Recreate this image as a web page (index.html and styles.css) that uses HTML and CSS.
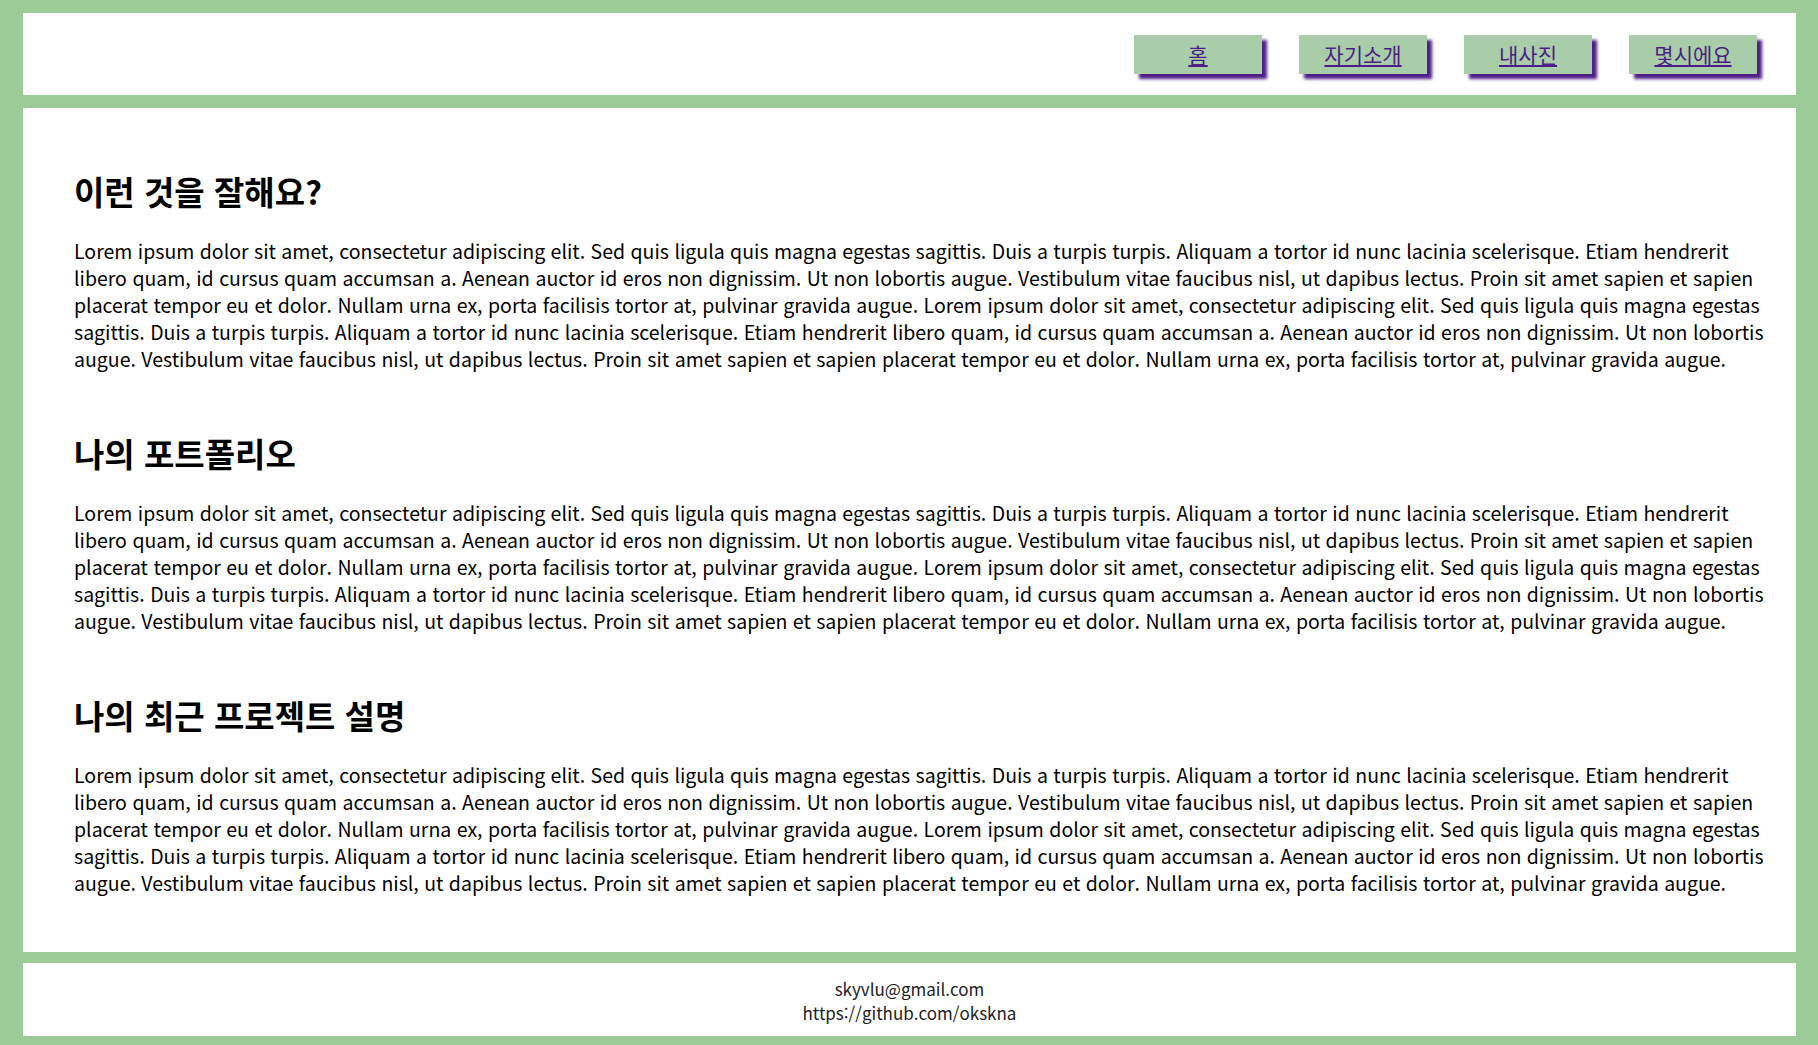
FILE: index.html
```html
<!DOCTYPE html>
<html lang="ko">
<head>
<meta charset="utf-8">
<title>포트폴리오</title>
<link rel="stylesheet" href="styles.css">
</head>
<body>
<header class="site-header">
  <nav class="nav">
    <a class="nav-btn" href="#">홈</a>
    <a class="nav-btn" href="#">자기소개</a>
    <a class="nav-btn" href="#">내사진</a>
    <a class="nav-btn" href="#">몇시에요</a>
  </nav>
</header>
<main class="content">
  <section class="block">
    <h2 class="block-title">이런 것을 잘해요?</h2>
    <p class="block-text">Lorem ipsum dolor sit amet, consectetur adipiscing elit. Sed quis ligula quis magna egestas sagittis. Duis a turpis turpis. Aliquam a tortor id nunc lacinia scelerisque. Etiam hendrerit libero quam, id cursus quam accumsan a. Aenean auctor id eros non dignissim. Ut non lobortis augue. Vestibulum vitae faucibus nisl, ut dapibus lectus. Proin sit amet sapien et sapien placerat tempor eu et dolor. Nullam urna ex, porta facilisis tortor at, pulvinar gravida augue. Lorem ipsum dolor sit amet, consectetur adipiscing elit. Sed quis ligula quis magna egestas sagittis. Duis a turpis turpis. Aliquam a tortor id nunc lacinia scelerisque. Etiam hendrerit libero quam, id cursus quam accumsan a. Aenean auctor id eros non dignissim. Ut non lobortis augue. Vestibulum vitae faucibus nisl, ut dapibus lectus. Proin sit amet sapien et sapien placerat tempor eu et dolor. Nullam urna ex, porta facilisis tortor at, pulvinar gravida augue.</p>
  </section>
  <section class="block">
    <h2 class="block-title">나의 포트폴리오</h2>
    <p class="block-text">Lorem ipsum dolor sit amet, consectetur adipiscing elit. Sed quis ligula quis magna egestas sagittis. Duis a turpis turpis. Aliquam a tortor id nunc lacinia scelerisque. Etiam hendrerit libero quam, id cursus quam accumsan a. Aenean auctor id eros non dignissim. Ut non lobortis augue. Vestibulum vitae faucibus nisl, ut dapibus lectus. Proin sit amet sapien et sapien placerat tempor eu et dolor. Nullam urna ex, porta facilisis tortor at, pulvinar gravida augue. Lorem ipsum dolor sit amet, consectetur adipiscing elit. Sed quis ligula quis magna egestas sagittis. Duis a turpis turpis. Aliquam a tortor id nunc lacinia scelerisque. Etiam hendrerit libero quam, id cursus quam accumsan a. Aenean auctor id eros non dignissim. Ut non lobortis augue. Vestibulum vitae faucibus nisl, ut dapibus lectus. Proin sit amet sapien et sapien placerat tempor eu et dolor. Nullam urna ex, porta facilisis tortor at, pulvinar gravida augue.</p>
  </section>
  <section class="block">
    <h2 class="block-title">나의 최근 프로젝트 설명</h2>
    <p class="block-text">Lorem ipsum dolor sit amet, consectetur adipiscing elit. Sed quis ligula quis magna egestas sagittis. Duis a turpis turpis. Aliquam a tortor id nunc lacinia scelerisque. Etiam hendrerit libero quam, id cursus quam accumsan a. Aenean auctor id eros non dignissim. Ut non lobortis augue. Vestibulum vitae faucibus nisl, ut dapibus lectus. Proin sit amet sapien et sapien placerat tempor eu et dolor. Nullam urna ex, porta facilisis tortor at, pulvinar gravida augue. Lorem ipsum dolor sit amet, consectetur adipiscing elit. Sed quis ligula quis magna egestas sagittis. Duis a turpis turpis. Aliquam a tortor id nunc lacinia scelerisque. Etiam hendrerit libero quam, id cursus quam accumsan a. Aenean auctor id eros non dignissim. Ut non lobortis augue. Vestibulum vitae faucibus nisl, ut dapibus lectus. Proin sit amet sapien et sapien placerat tempor eu et dolor. Nullam urna ex, porta facilisis tortor at, pulvinar gravida augue.</p>
  </section>
</main>
<footer class="site-footer">
  <p class="footer-line">skyvlu@gmail.com</p>
  <p class="footer-line">https://github.com/okskna</p>
</footer>
</body>
</html>
```

FILE: styles.css
```css
* { box-sizing: border-box; }

body {
  margin: 0;
  padding: 13px 22px 9px 23px;
  background: #9ccb98;
  font-family: "Noto Sans CJK KR", "Noto Sans", sans-serif;
  color: #000;
  display: flex;
  flex-direction: column;
}

.site-header,
.content,
.site-footer {
  flex-shrink: 0;
}

.site-header {
  background: #fff;
  height: 82px;
  display: flex;
  align-items: center;
  justify-content: flex-end;
  padding-right: 39px;
}

.nav {
  display: flex;
  gap: 37px;
}

.nav-btn {
  width: 128px;
  height: 39px;
  display: flex;
  align-items: center;
  justify-content: center;
  background: #a9cca9;
  color: #4b1f86;
  font-size: 21px;
  text-decoration: underline;
  box-shadow: 5px 5px 3px #4e1f87;
}

.content {
  background: #fff;
  margin-top: 13px;
  padding: 64px 30px 56px 51px;
  display: flex;
  flex-direction: column;
  gap: 62px;
}

.block-title {
  margin: 0 0 27px;
  font-size: 33px;
  line-height: 38px;
  font-weight: 700;
}

.block-text {
  margin: 0;
  font-size: 19.5px;
  line-height: 27px;
}

.site-footer {
  background: #fff;
  margin-top: 11px;
  height: 73px;
  padding-top: 14px;
  text-align: center;
  color: #222;
}

.footer-line {
  margin: 0;
  font-size: 17px;
  line-height: 24px;
}
```
